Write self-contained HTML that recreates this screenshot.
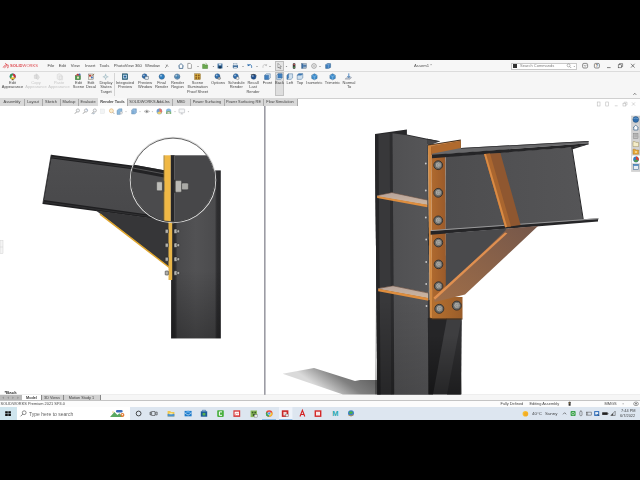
<!DOCTYPE html>
<html><head><meta charset="utf-8"><title>SOLIDWORKS</title>
<style>
html,body{margin:0;padding:0;background:#000;}
body{width:640px;height:480px;overflow:hidden;position:relative;font-family:"Liberation Sans",sans-serif;}
#app{position:absolute;left:0;top:60px;width:640px;height:360px;background:#fff;overflow:hidden;}
.t{position:absolute;white-space:nowrap;color:#222;filter:blur(0.22px);opacity:0.84;}
.c{text-align:center;transform:translateX(-50%);}
.r{position:absolute;}
svg{position:absolute;left:0;top:0;}
</style></head><body>
<div id="app">

<div class="r" style="left:0px;top:0px;width:640px;height:11px;background:#f7f7f7;"></div>
<div class="r" style="left:0px;top:11px;width:640px;height:0.6px;background:#dcdcdc;"></div>
<div class="r" style="left:0px;top:11.6px;width:640px;height:26.4px;background:#f6f6f6;"></div>
<div class="r" style="left:0px;top:38px;width:297px;height:8px;background:#d9d9d9;"></div>
<div class="r" style="left:297px;top:38px;width:343px;height:0.7px;background:#d0d0d0;"></div>
<div class="t" style="left:10px;top:3.6px;font-size:4.1px;line-height:4.92px;color:#d8262c;"><b>SOLID</b>WORKS</div>
<div class="t" style="left:47.5px;top:3.4px;font-size:4.2px;line-height:5.04px;color:#222;">File</div>
<div class="t" style="left:58.8px;top:3.4px;font-size:4.2px;line-height:5.04px;color:#222;">Edit</div>
<div class="t" style="left:70.8px;top:3.4px;font-size:4.2px;line-height:5.04px;color:#222;">View</div>
<div class="t" style="left:85px;top:3.4px;font-size:4.2px;line-height:5.04px;color:#222;">Insert</div>
<div class="t" style="left:99.5px;top:3.4px;font-size:4.2px;line-height:5.04px;color:#222;">Tools</div>
<div class="t" style="left:113.8px;top:3.4px;font-size:4.2px;line-height:5.04px;color:#222;">PhotoView 360</div>
<div class="t" style="left:145px;top:3.4px;font-size:4.2px;line-height:5.04px;color:#222;">Window</div>
<div class="t" style="left:414px;top:3.4px;font-size:4.2px;line-height:5.04px;color:#333;">Assem1 *</div>
<div class="r" style="left:511px;top:2.5px;width:66px;height:7px;background:#fff;border:0.5px solid #c8c8c8;box-sizing:border-box;"></div>
<div class="r" style="left:513px;top:4px;width:4px;height:4px;background:#333;"></div>
<div class="t" style="left:520px;top:3.6px;font-size:4px;line-height:4.80px;color:#666;">Search Commands</div>
<div class="r" style="left:274.7px;top:1px;width:9.2px;height:9.6px;background:#e4e4e4;border:0.5px solid #bdbdbd;box-sizing:border-box;"></div>
<div class="r" style="left:274.6px;top:11.6px;width:9.8px;height:24px;background:#dedede;border:0.5px solid #c2c2c2;box-sizing:border-box;"></div>
<div class="t c" style="left:12.5px;top:20.6px;font-size:4px;line-height:4.80px;color:#222;">Edit</div>
<div class="t c" style="left:12.5px;top:25.1px;font-size:4px;line-height:4.80px;color:#222;">Appearance</div>
<div class="t c" style="left:36px;top:20.6px;font-size:4px;line-height:4.80px;color:#bbb;">Copy</div>
<div class="t c" style="left:36px;top:25.1px;font-size:4px;line-height:4.80px;color:#bbb;">Appearance</div>
<div class="t c" style="left:59px;top:20.6px;font-size:4px;line-height:4.80px;color:#bbb;">Paste</div>
<div class="t c" style="left:59px;top:25.1px;font-size:4px;line-height:4.80px;color:#bbb;">Appearance</div>
<div class="t c" style="left:78.5px;top:20.6px;font-size:4px;line-height:4.80px;color:#222;">Edit</div>
<div class="t c" style="left:78.5px;top:25.1px;font-size:4px;line-height:4.80px;color:#222;">Scene</div>
<div class="t c" style="left:91px;top:20.6px;font-size:4px;line-height:4.80px;color:#222;">Edit</div>
<div class="t c" style="left:91px;top:25.1px;font-size:4px;line-height:4.80px;color:#222;">Decal</div>
<div class="t c" style="left:106px;top:20.6px;font-size:4px;line-height:4.80px;color:#222;">Display</div>
<div class="t c" style="left:106px;top:25.1px;font-size:4px;line-height:4.80px;color:#222;">States</div>
<div class="t c" style="left:106px;top:29.6px;font-size:4px;line-height:4.80px;color:#222;">Target</div>
<div class="t c" style="left:125px;top:20.6px;font-size:4px;line-height:4.80px;color:#222;">Integrated</div>
<div class="t c" style="left:125px;top:25.1px;font-size:4px;line-height:4.80px;color:#222;">Preview</div>
<div class="t c" style="left:145px;top:20.6px;font-size:4px;line-height:4.80px;color:#222;">Preview</div>
<div class="t c" style="left:145px;top:25.1px;font-size:4px;line-height:4.80px;color:#222;">Window</div>
<div class="t c" style="left:161.5px;top:20.6px;font-size:4px;line-height:4.80px;color:#222;">Final</div>
<div class="t c" style="left:161.5px;top:25.1px;font-size:4px;line-height:4.80px;color:#222;">Render</div>
<div class="t c" style="left:177.5px;top:20.6px;font-size:4px;line-height:4.80px;color:#222;">Render</div>
<div class="t c" style="left:177.5px;top:25.1px;font-size:4px;line-height:4.80px;color:#222;">Region</div>
<div class="t c" style="left:197.5px;top:20.6px;font-size:4px;line-height:4.80px;color:#222;">Scene</div>
<div class="t c" style="left:197.5px;top:25.1px;font-size:4px;line-height:4.80px;color:#222;">Illumination</div>
<div class="t c" style="left:197.5px;top:29.6px;font-size:4px;line-height:4.80px;color:#222;">Proof Sheet</div>
<div class="t c" style="left:218px;top:20.6px;font-size:4px;line-height:4.80px;color:#222;">Options</div>
<div class="t c" style="left:236.3px;top:20.6px;font-size:4px;line-height:4.80px;color:#222;">Schedule</div>
<div class="t c" style="left:236.3px;top:25.1px;font-size:4px;line-height:4.80px;color:#222;">Render</div>
<div class="t c" style="left:253px;top:20.6px;font-size:4px;line-height:4.80px;color:#222;">Recall</div>
<div class="t c" style="left:253px;top:25.1px;font-size:4px;line-height:4.80px;color:#222;">Last</div>
<div class="t c" style="left:253px;top:29.6px;font-size:4px;line-height:4.80px;color:#222;">Render</div>
<div class="t c" style="left:267.5px;top:20.6px;font-size:4px;line-height:4.80px;color:#222;">Front</div>
<div class="t c" style="left:279.5px;top:20.6px;font-size:4px;line-height:4.80px;color:#222;">Back</div>
<div class="t c" style="left:289.8px;top:20.6px;font-size:4px;line-height:4.80px;color:#222;">Left</div>
<div class="t c" style="left:300px;top:20.6px;font-size:4px;line-height:4.80px;color:#222;">Top</div>
<div class="t c" style="left:314.4px;top:20.6px;font-size:4px;line-height:4.80px;color:#222;">Isometric</div>
<div class="t c" style="left:332.5px;top:20.6px;font-size:4px;line-height:4.80px;color:#222;">Trimetric</div>
<div class="t c" style="left:349px;top:20.6px;font-size:4px;line-height:4.80px;color:#222;">Normal</div>
<div class="t c" style="left:349px;top:25.1px;font-size:4px;line-height:4.80px;color:#222;">To</div>
<div class="r" style="left:114px;top:13px;width:0.5px;height:23px;background:#d5d5d5;"></div>
<div class="r" style="left:23.7px;top:39px;width:0.5px;height:6.5px;background:#aaa;"></div>
<div class="t c" style="left:12.0px;top:40.4px;font-size:3.9px;line-height:4.68px;color:#222;">Assembly</div>
<div class="r" style="left:41.7px;top:39px;width:0.5px;height:6.5px;background:#aaa;"></div>
<div class="t c" style="left:33.0px;top:40.4px;font-size:3.9px;line-height:4.68px;color:#222;">Layout</div>
<div class="r" style="left:59.7px;top:39px;width:0.5px;height:6.5px;background:#aaa;"></div>
<div class="t c" style="left:51.0px;top:40.4px;font-size:3.9px;line-height:4.68px;color:#222;">Sketch</div>
<div class="r" style="left:77.7px;top:39px;width:0.5px;height:6.5px;background:#aaa;"></div>
<div class="t c" style="left:69.0px;top:40.4px;font-size:3.9px;line-height:4.68px;color:#222;">Markup</div>
<div class="r" style="left:97.7px;top:39px;width:0.5px;height:6.5px;background:#aaa;"></div>
<div class="t c" style="left:88.0px;top:40.4px;font-size:3.9px;line-height:4.68px;color:#222;">Evaluate</div>
<div class="r" style="left:98px;top:38px;width:29px;height:8px;background:#f8f8f8;"></div>
<div class="r" style="left:126.7px;top:39px;width:0.5px;height:6.5px;background:#aaa;"></div>
<div class="t c" style="left:112.5px;top:40.4px;font-size:3.9px;line-height:4.68px;color:#222;font-weight:bold;">Render Tools</div>
<div class="r" style="left:171.7px;top:39px;width:0.5px;height:6.5px;background:#aaa;"></div>
<div class="t c" style="left:149.5px;top:40.4px;font-size:3.9px;line-height:4.68px;color:#222;">SOLIDWORKS Add-Ins</div>
<div class="r" style="left:189.7px;top:39px;width:0.5px;height:6.5px;background:#aaa;"></div>
<div class="t c" style="left:181.0px;top:40.4px;font-size:3.9px;line-height:4.68px;color:#222;">MBD</div>
<div class="r" style="left:223.7px;top:39px;width:0.5px;height:6.5px;background:#aaa;"></div>
<div class="t c" style="left:207.0px;top:40.4px;font-size:3.9px;line-height:4.68px;color:#222;">Power Surfacing</div>
<div class="r" style="left:262.7px;top:39px;width:0.5px;height:6.5px;background:#aaa;"></div>
<div class="t c" style="left:243.5px;top:40.4px;font-size:3.9px;line-height:4.68px;color:#222;">Power Surfacing RE</div>
<div class="r" style="left:296.7px;top:39px;width:0.5px;height:6.5px;background:#aaa;"></div>
<div class="t c" style="left:280.0px;top:40.4px;font-size:3.9px;line-height:4.68px;color:#222;">Flow Simulation</div>
<svg width="640" height="360" viewBox="0 60 640 360">
<defs>
<linearGradient id="gcol" x1="0" x2="1" y1="0" y2="0"><stop offset="0" stop-color="#262628"/><stop offset="0.08" stop-color="#2c2c2e"/><stop offset="0.13" stop-color="#4a4a4c"/><stop offset="0.5" stop-color="#525254"/><stop offset="0.88" stop-color="#4b4b4d"/><stop offset="0.92" stop-color="#2e2e30"/><stop offset="1" stop-color="#29292b"/></linearGradient>
<linearGradient id="gbeam" x1="0" x2="0" y1="0" y2="1"><stop offset="0" stop-color="#4e4e50"/><stop offset="1" stop-color="#48484a"/></linearGradient>
<linearGradient id="gshadow" gradientUnits="userSpaceOnUse" x1="330" y1="396" x2="352" y2="366"><stop offset="0" stop-color="#dadada"/><stop offset="0.55" stop-color="#808080"/><stop offset="1" stop-color="#666666"/></linearGradient>
<linearGradient id="gcop" x1="0" x2="1" y1="0" y2="0"><stop offset="0" stop-color="#b06a2e"/><stop offset="1" stop-color="#9a5a2a"/></linearGradient>
<linearGradient id="gweb" x1="0" x2="1" y1="0" y2="0"><stop offset="0" stop-color="#505052"/><stop offset="1" stop-color="#565658"/></linearGradient>
<clipPath id="cc"><circle cx="173" cy="180" r="41.6"/></clipPath>
<linearGradient id="gdark" x1="0" x2="0" y1="0" y2="1"><stop offset="0" stop-color="#000" stop-opacity="0"/><stop offset="1" stop-color="#000" stop-opacity="0.4"/></linearGradient>
<linearGradient id="gdark2" x1="0" x2="0" y1="0" y2="1"><stop offset="0" stop-color="#000" stop-opacity="0"/><stop offset="1" stop-color="#000" stop-opacity="0.28"/></linearGradient>
<linearGradient id="ghf" x1="0" x2="1" y1="1" y2="0"><stop offset="0" stop-color="#a06e48"/><stop offset="1" stop-color="#75574a"/></linearGradient>
<linearGradient id="gcop2" x1="0" x2="1" y1="0" y2="0"><stop offset="0" stop-color="#b5702f"/><stop offset="1" stop-color="#9a5d2a"/></linearGradient>
<linearGradient id="gst" x1="0" x2="0" y1="0" y2="1"><stop offset="0" stop-color="#b6a39a"/><stop offset="1" stop-color="#cdb6a2"/></linearGradient>
<linearGradient id="gbw" x1="0" x2="1" y1="0" y2="0"><stop offset="0" stop-color="#4d4d4f"/><stop offset="1" stop-color="#555557"/></linearGradient>
</defs>
<!-- divider & right pane -->
<rect x="264" y="106" width="1.6" height="289" fill="#9c9ca4"/>
<rect x="0" y="394.7" width="640" height="0.7" fill="#c6c6c6"/>
<!-- ============ LEFT MODEL ============ -->
<g id="leftmodel">
<polygon points="51.2,154.8 170,170.6 170,221 42.8,203.9" fill="#1f1f21"/>
<polygon points="51.4,158.4 170,174.2 170,217.4 43.9,200" fill="url(#gbeam)"/>
<line x1="51" y1="156.9" x2="170" y2="172.7" stroke="#404042" stroke-width="0.6"/>
<line x1="43.4" y1="202" x2="170" y2="219.2" stroke="#3c3c3e" stroke-width="0.6"/>
<line x1="51.2" y1="154.8" x2="42.8" y2="203.9" stroke="#2a2a2c" stroke-width="0.8"/>
<!-- haunch L -->
<polygon points="96,210.6 170,220.6 170,268" fill="#363638"/>
<line x1="100" y1="214.2" x2="170" y2="268" stroke="#dfa52c" stroke-width="1.5"/>
<!-- column L -->
<rect x="171.1" y="170.4" width="49.7" height="168" fill="url(#gcol)"/>
<rect x="171.1" y="270" width="49.7" height="68.4" fill="url(#gdark2)"/>
<!-- end plate L -->
<rect x="168.5" y="165" width="3.7" height="115" fill="#e8b548"/>
<!-- bolts L -->
<g fill="#b2b2ae" stroke="#202020" stroke-width="0.5">
<rect x="165.2" y="229.3" width="3.2" height="4" rx="0.6"/><rect x="174" y="229.0" width="3.2" height="4.6" rx="0.9"/><rect x="177" y="229.8" width="2.6" height="3" rx="0.9"/>
<rect x="165.2" y="243.2" width="3.2" height="4" rx="0.6"/><rect x="174" y="242.9" width="3.2" height="4.6" rx="0.9"/><rect x="177" y="243.7" width="2.6" height="3" rx="0.9"/>
<rect x="165.2" y="257.2" width="3.2" height="4" rx="0.6"/><rect x="174" y="256.9" width="3.2" height="4.6" rx="0.9"/><rect x="177" y="257.7" width="2.6" height="3" rx="0.9"/>
<rect x="165.2" y="271.0" width="3.2" height="4" rx="0.6"/><rect x="174" y="270.7" width="3.2" height="4.6" rx="0.9"/><rect x="177" y="271.5" width="2.6" height="3" rx="0.9"/>
</g>
<!-- magnifier -->
<circle cx="173" cy="180" r="42.7" fill="none" stroke="#dcdcdc" stroke-width="1.1"/>
<circle cx="173" cy="180" r="41.5" fill="#fff"/>
<g clip-path="url(#cc)">
<polygon points="120,162.1 164.2,170.35 164.2,230 120,230" fill="#4b4b4d"/>
<polygon points="120,162.1 164.2,170.35 164.2,177.4 120,169.2" fill="#232325"/>
<line x1="120" y1="165.6" x2="164.2" y2="173.9" stroke="#5c5c5e" stroke-width="0.9"/>
<polygon points="120,213.4 164.2,224.4 164.2,232 120,232" fill="#232325"/>
<rect x="170.6" y="155.3" width="60" height="80" fill="#474749"/>
<rect x="170.6" y="155.3" width="3.4" height="80" fill="#262628"/>
<rect x="174" y="155.3" width="1" height="80" fill="#5a5a5c"/>
<rect x="164.2" y="155.3" width="6.4" height="80" fill="#f0b845"/>
<rect x="163.6" y="155.3" width="0.8" height="80" fill="#8a6a20"/>
<rect x="156.6" y="181.8" width="5.8" height="9" rx="1" fill="#bdbdb9" stroke="#3a3a3a" stroke-width="0.5"/>
<rect x="162.4" y="180.8" width="1.8" height="11" fill="#4a4a4a"/>
<rect x="175" y="180.6" width="6.6" height="11.6" rx="1.2" fill="#b9b9b5" stroke="#3a3a3a" stroke-width="0.5"/>
<rect x="181.6" y="183" width="6.8" height="6.8" rx="1.2" fill="#aaaaa6" stroke="#3a3a3a" stroke-width="0.5"/>
<rect x="173.6" y="179.8" width="1.8" height="13" fill="#333"/>
</g>
<circle cx="173" cy="180" r="41.9" fill="none" stroke="#3a3a3a" stroke-width="0.8"/>
</g>
<!-- ============ RIGHT MODEL ============ -->
<g id="rightmodel">
<!-- ground shadow -->
<polygon points="282.6,373.8 314,368 355,381 360,380 378,380 378,394.4 343,394.4" fill="url(#gshadow)"/>
<!-- column R -->
<polygon points="375,134 406.9,129.4 406.9,134.4 439.4,141.25 427.5,144 428.7,394.4 377.3,394.4" fill="#29292b"/>
<polygon points="375,134.9 390,132.9 391.8,394.4 377.3,394.4" fill="#38383a"/>
<polygon points="375,134.9 378.4,134.5 380.6,394.4 377.3,394.4" fill="#252527"/>
<polygon points="389.6,132.9 392.8,132.9 394.4,394.4 391.4,394.4" fill="#2d2d2f"/>
<polygon points="392.5,133.2 406.9,135.3 427.5,139.7 428.7,394.4 394.4,394.4" fill="url(#gweb)"/>
<polygon points="427.8,300 461.8,300 460.8,394.4 428.7,394.4" fill="#3e3e40"/>
<polygon points="427.8,318 447,318 433,394.4 428.7,394.4" fill="#252527"/>
<polygon points="461.6,318 460.8,394.4 447,394.4" fill="#303032"/>
<rect x="375" y="300" width="19" height="94.4" fill="url(#gdark)" opacity="0.8"/><rect x="428" y="335" width="34" height="59.4" fill="url(#gdark)"/><rect x="394.4" y="300" width="34" height="94.4" fill="url(#gdark)" opacity="0.35"/>
<!-- column stiffeners -->
<polygon points="377.1,195.4 391.9,192.4 427.4,200 427.4,205 377.1,196.4" fill="url(#gst)"/>
<polygon points="377.1,196 427.4,204.8 427.4,207.2 377.1,198.1" fill="#df8e3e"/>
<polygon points="377.1,195.2 391.9,192.2 427.4,199.8 427.4,200.6 391.9,193 377.1,196" fill="#5a4030" opacity="0.6"/>
<polygon points="378.2,288.3 393,285.7 428.4,292.8 428.4,298.2 378.2,289" fill="url(#gst)"/>
<polygon points="378.2,288.7 428.4,298 428.4,300.8 378.2,291.2" fill="#df8e3e"/>
<polygon points="378.2,288.1 393,285.5 428.4,292.6 428.4,293.4 393,286.3 378.2,288.9" fill="#5a4030" opacity="0.6"/>
<polygon points="427,139 439.6,141.4 428,146" fill="#454547"/><line x1="427" y1="139.2" x2="439.6" y2="141.5" stroke="#29292b" stroke-width="0.8"/>
<!-- end plate R -->
<polygon points="428,144.8 460.8,139.5 460.8,150 431.2,155" fill="#3a2a1c"/>
<polygon points="427.4,144 428,145.4 429.8,318 428.6,318" fill="#242426"/>
<polygon points="428,145.4 431.2,146 432.2,318.6 429.8,317.8" fill="#d08841"/>
<polygon points="431.2,146 445.4,146 446.2,318.6 432.2,318.6" fill="url(#gcop)"/>
<polygon points="431.2,146.3 460.8,141.2 460.8,150 431.2,155" fill="#b06a2e"/>
<polygon points="428,145.6 460.8,140.4 460.8,141.3 431.2,146.4" fill="#c98345"/>
<rect x="432.2" y="297" width="30.3" height="21.6" fill="url(#gcop2)"/>
<polygon points="429.8,317.6 432.2,318.4 462.5,318.4 462.5,319.4 432,319.4 429.8,318.6" fill="#4a3018"/>
<!-- beam web -->
<polygon points="445.6,156.4 571.8,147.2 583.2,220 445.6,231" fill="url(#gbw)"/>
<line x1="571.9" y1="147.4" x2="583.3" y2="219.8" stroke="#262628" stroke-width="1"/>
<polygon points="571,147.2 588.6,144.3 572,149.4" fill="#2a2a2c"/>
<!-- beam top flange -->
<polygon points="432,153.8 461,148 588.6,141.1 588.6,143.3 432,155" fill="#68686a"/>
<polygon points="432,154.8 588.6,143.2 588.6,144.5 571,147.4 432,158.2" fill="#252527"/>
<polygon points="461,148 588.6,141.1 588.6,141.8 461,148.8" fill="#2e2e30"/>
<!-- beam bottom flange -->
<polygon points="445.6,229 582.5,219.2 598.4,218.2 598.4,219.4 430.6,231.2" fill="#59595b"/>
<polygon points="430.6,230.9 598,218.9 598,221.6 430.6,234.8" fill="#252527"/>
<line x1="430.6" y1="230.6" x2="598.4" y2="218.7" stroke="#a0a0a2" stroke-width="0.9"/>
<!-- stiffener -->
<polygon points="484,154 500.4,153 520.6,225 505.1,227.2" fill="#8f5730"/>
<polygon points="484,154 490,153.6 511,226.4 505.1,227.2" fill="#aa662f"/>
<polygon points="484,154 486,153.9 507.2,226.9 505.1,227.2" fill="#d98b45"/>
<!-- haunch -->
<polygon points="445.8,233.2 506,228.5 507,231 445.8,289" fill="#4a4a4c"/>
<polygon points="434,299.5 505.5,230.5 506,228.7 538,226.1 465,294.6 435,302" fill="url(#ghf)"/>
<polygon points="433.6,297.6 505,232.6 507.4,233.3 435,299.8" fill="#e09050"/>
<!-- bolts -->
<g fill="#6c6c6a" stroke="#262626" stroke-width="0.8"><circle cx="438.2" cy="165.2" r="4.4"/><circle cx="438.2" cy="192.8" r="4.4"/><circle cx="438.2" cy="220.4" r="4.4"/><circle cx="438.4" cy="242.6" r="4.3"/><circle cx="438.5" cy="264.4" r="4.3"/><circle cx="438.6" cy="286.1" r="4.3"/><circle cx="439.3" cy="308.8" r="4.5"/><circle cx="456.8" cy="305.6" r="4.5"/></g>
<g fill="#b4b4b0" stroke="#4a4a46" stroke-width="0.5"><circle cx="438.4" cy="165.0" r="2.99"/><circle cx="438.4" cy="192.60000000000002" r="2.99"/><circle cx="438.4" cy="220.20000000000002" r="2.99"/><circle cx="438.59999999999997" cy="242.4" r="2.92"/><circle cx="438.7" cy="264.2" r="2.92"/><circle cx="438.8" cy="285.90000000000003" r="2.92"/><circle cx="439.5" cy="308.6" r="3.06"/><circle cx="457.0" cy="305.40000000000003" r="3.06"/></g>
<g fill="#a5a5a1" stroke="#6a6a64" stroke-width="0.4"><circle cx="438.7" cy="165.1" r="1.67"/><circle cx="438.7" cy="192.70000000000002" r="1.67"/><circle cx="438.7" cy="220.3" r="1.67"/><circle cx="438.9" cy="242.5" r="1.63"/><circle cx="439.0" cy="264.29999999999995" r="1.63"/><circle cx="439.1" cy="286.0" r="1.63"/><circle cx="439.8" cy="308.7" r="1.71"/><circle cx="457.3" cy="305.5" r="1.71"/></g>
<g fill="#c9c9c9">
<circle cx="425.8" cy="163.5" r="0.9"/><circle cx="425.8" cy="190.5" r="0.9"/><circle cx="425.8" cy="217.5" r="0.9"/>
<circle cx="426.2" cy="239.5" r="0.9"/><circle cx="426.2" cy="262" r="0.9"/><circle cx="426.2" cy="284" r="0.9"/><circle cx="426.5" cy="306" r="0.9"/>
</g>
</g>
</svg>

<div class="t" style="left:4.4px;top:329.6px;font-size:4.4px;line-height:5.28px;color:#000;font-weight:bold;font-family:"Liberation Mono",monospace;letter-spacing:0.1px;">*Back</div>
<div class="r" style="left:0px;top:335.4px;width:640px;height:5px;background:#f6f6f6;"></div>
<div class="r" style="left:0px;top:335px;width:22px;height:5.5px;background:#b9b9b9;"></div>
<div class="r" style="left:22px;top:335px;width:19px;height:5.5px;background:#fff;"></div>
<div class="r" style="left:41px;top:335px;width:59px;height:5.5px;background:#d2d2d2;"></div>
<div class="r" style="left:41px;top:335px;width:0.5px;height:5.5px;background:#888;"></div>
<div class="r" style="left:63px;top:335px;width:0.5px;height:5.5px;background:#888;"></div>
<div class="r" style="left:100px;top:335px;width:0.5px;height:5.5px;background:#888;"></div>
<div class="t c" style="left:31.5px;top:335.6px;font-size:3.8px;line-height:4.56px;color:#111;font-weight:bold;">Model</div>
<div class="t c" style="left:52px;top:335.6px;font-size:3.8px;line-height:4.56px;color:#222;">3D Views</div>
<div class="t c" style="left:81.5px;top:335.6px;font-size:3.8px;line-height:4.56px;color:#222;">Motion Study 1</div>
<div class="r" style="left:0px;top:340px;width:640px;height:7px;background:#fcfcfc;border-top:0.6px solid #c4c4c4;box-sizing:border-box;"></div>
<div class="t" style="left:0.5px;top:341.6px;font-size:3.9px;line-height:4.68px;color:#222;">SOLIDWORKS Premium 2021 SP4.0</div>
<div class="t" style="left:500.5px;top:341.6px;font-size:3.9px;line-height:4.68px;color:#222;">Fully Defined</div>
<div class="t" style="left:529.5px;top:341.6px;font-size:3.9px;line-height:4.68px;color:#222;">Editing Assembly</div>
<div class="t" style="left:604.5px;top:341.6px;font-size:3.9px;line-height:4.68px;color:#222;">MMGS</div>
<div class="r" style="left:0px;top:347px;width:640px;height:13px;background:#dde6f0;"></div>
<div class="r" style="left:0px;top:347px;width:16.5px;height:13px;background:#cfe5ee;"></div>
<div class="r" style="left:16.5px;top:347px;width:113.5px;height:13px;background:#fff;"></div>
<div class="t" style="left:29px;top:350.6px;font-size:5px;line-height:6.00px;color:#444;">Type here to search</div>
<div class="t" style="left:532px;top:351px;font-size:4.4px;line-height:5.28px;color:#222;">40°C</div>
<div class="t" style="left:545px;top:351px;font-size:4.4px;line-height:5.28px;color:#222;">Sunny</div>
<div class="t" style="left:621px;top:348.8px;font-size:3.9px;line-height:4.68px;color:#222;">7:44 PM</div>
<div class="t" style="left:620px;top:353.6px;font-size:3.9px;line-height:4.68px;color:#222;">6/7/2022</div>
<svg width="640" height="360" viewBox="0 60 640 360">
<path d="M3.2,67.6 C4.2,65.2 6.2,64.2 8.8,65.4 M5.2,63.2 L7.2,65 M4.4,67.8 L6.6,66 M7.2,67.8 C8.6,67.8 9,66.4 7.6,66.2" stroke="#d8262c" stroke-width="0.7" fill="none"/>
<path d="M165,68 l2.4,-2.4 m-1.2,-1 l2.2,2.2 m-2.6,-0.6 l1.6,-1.6" stroke="#555" stroke-width="0.5" fill="none"/>
<path d="M178.4,66 l2.6,-2.4 l2.6,2.4 M179.2,65.6 v2.8 h3.6 v-2.8" stroke="#1f4e79" stroke-width="0.7" fill="#fff"/>
<path d="M187.8,63.4 h2.4 l1.2,1.2 v3.8 h-3.6z" stroke="#555" stroke-width="0.5" fill="#fff"/>
<path d="M197.2,66.0 h1.6 l-0.8,0.9z" fill="#666"/>
<path d="M202.6,64.2 h2 l0.6,0.7 h2.4 v3.6 h-5z" fill="#6aa84f" stroke="#38761d" stroke-width="0.4"/><path d="M205.5,63.2 l1.6,1.2" stroke="#38761d" stroke-width="0.5"/>
<path d="M212.6,66.0 h1.6 l-0.8,0.9z" fill="#666"/>
<rect x="217.6" y="63.6" width="4.8" height="4.8" fill="#2a5d8f"/><rect x="218.6" y="63.6" width="2.8" height="1.8" fill="#cfe0ef"/><rect x="218.8" y="66.4" width="2.4" height="2" fill="#12324f"/>
<path d="M226.7,66.0 h1.6 l-0.8,0.9z" fill="#666"/>
<rect x="232.8" y="65.2" width="5.2" height="2.6" fill="#3f6f9f"/><rect x="233.8" y="63.6" width="3.2" height="1.8" fill="#dfe8f0" stroke="#5a7a9a" stroke-width="0.3"/><rect x="233.8" y="67" width="3.2" height="1.6" fill="#e8eef4" stroke="#5a7a9a" stroke-width="0.3"/>
<path d="M242.2,66.0 h1.6 l-0.8,0.9z" fill="#666"/>
<path d="M248.2,65.2 c1.8,-1.4 3.8,-0.6 3.4,2.6" stroke="#2f6fb0" stroke-width="0.9" fill="none"/><path d="M247.4,63.8 l0.4,2.4 l2.2,-0.8z" fill="#2f6fb0"/>
<path d="M256.2,66.0 h1.6 l-0.8,0.9z" fill="#666"/>
<path d="M266.4,65.2 c-1.8,-1.4 -3.8,-0.6 -3.4,2.6" stroke="#c4c4c4" stroke-width="0.9" fill="none"/><path d="M267.2,63.8 l-0.4,2.4 l-2.2,-0.8z" fill="#c4c4c4"/>
<path d="M269.2,66.0 h1.6 l-0.8,0.9z" fill="#666"/>
<path d="M278,63.4 v4.6 l1.1,-1 l0.9,1.8 l0.7,-0.3 l-0.9,-1.8 h1.5z" fill="#fff" stroke="#333" stroke-width="0.4"/>
<path d="M285.7,66.0 h1.6 l-0.8,0.9z" fill="#666"/>
<rect x="292.8" y="63.2" width="2.6" height="5.6" rx="0.8" fill="#333"/><circle cx="294.1" cy="64.6" r="0.8" fill="#e06060"/><circle cx="294.1" cy="67.2" r="0.8" fill="#60c060"/>
<rect x="301.6" y="63.6" width="4.8" height="4.8" fill="#9fb4c8" stroke="#456" stroke-width="0.3"/><rect x="301.6" y="63.6" width="1.6" height="4.8" fill="#3b6ea5"/><rect x="303.2" y="65.2" width="3.2" height="1.4" fill="#3b6ea5"/>
<circle cx="314" cy="66" r="2.3" fill="none" stroke="#9a9a9a" stroke-width="0.9"/><circle cx="314" cy="66" r="0.8" fill="#9a9a9a"/>
<path d="M319.2,66.0 h1.6 l-0.8,0.9z" fill="#666"/>
<path d="M325.6,64.6 l2,-1 h3 v3.8 l-2,1 h-3z" fill="#3f7fbf" stroke="#1f4e79" stroke-width="0.4"/><path d="M325.6,64.6 h3 v3.8 M328.6,64.6 l2,-1" stroke="#cfe0f0" stroke-width="0.3" fill="none"/>
<circle cx="568.6" cy="65.4" r="1.5" fill="none" stroke="#777" stroke-width="0.5"/><path d="M569.7,66.5 l1.5,1.5" stroke="#777" stroke-width="0.6"/>
<path d="M573.5,65.9 h1.6 l-0.8,0.9z" fill="#666"/>
<rect x="582.6" y="63.4" width="5" height="4.6" rx="1.2" fill="none" stroke="#444" stroke-width="0.6"/><path d="M583.6,65 l1.5,1.2 l1.5,-1.2" stroke="#444" stroke-width="0.5" fill="none"/>
<rect x="594.4" y="63.4" width="5" height="4.6" rx="1.2" fill="none" stroke="#444" stroke-width="0.6"/><text x="596.9" y="67.2" font-size="3.6" font-family="Liberation Sans, sans-serif" font-weight="bold" text-anchor="middle" fill="#444">?</text>
<path d="M607,67.6 h3.6" stroke="#333" stroke-width="0.6"/>
<rect x="618.2" y="64.8" width="3.2" height="3" fill="none" stroke="#333" stroke-width="0.5"/><path d="M619.4,64.8 v-1.2 h3.2 v3 h-1.2" fill="none" stroke="#333" stroke-width="0.5"/>
<path d="M631,63.8 l3.6,3.8 m0,-3.8 l-3.6,3.8" stroke="#333" stroke-width="0.6"/>
<path d="M633.4,94.8 l1.4,-1.5 l1.4,1.5" stroke="#333" stroke-width="0.6" fill="none"/>
<g stroke="#b0b0b0" stroke-width="0.5" fill="none"><rect x="597.2" y="102" width="2.8" height="4"/><rect x="605.8" y="102" width="2.8" height="4"/><path d="M614.8,105.8 h2.8"/><rect x="623" y="103.2" width="2.8" height="2.8"/><path d="M624.2,103.2 v-1 h2.8 v2.8 h-1.2"/><path d="M632,102.4 l3,3.2 m0,-3.2 l-3,3.2"/></g>
<circle cx="12.7" cy="76.6" r="3" fill="#3a7abf"/><path d="M12.7,76.6 L12.7,73.6 A3,3 0 0 1 15.3,78.1z" fill="#d03030"/><path d="M12.7,76.6 L15.3,78.1 A3,3 0 0 1 10.1,78.1z" fill="#e8c030"/><path d="M12.7,76.6 L10.1,78.1 A3,3 0 0 1 12.7,73.6z" fill="#3a9a4a"/><circle cx="12.7" cy="76.6" r="1" fill="#f4f4f4"/><path d="M12,79 l1.4,0 l0.3,1.2 h-2z" fill="#7a5a30"/>
<path d="M34.4,75 h2.6 v3.4 h-2.6z M36,73.8 l1.8,1 l1.6,2.4 l-1.4,2.4 l-1.6,-1z" fill="#e2e2e2" stroke="#c6c6c6" stroke-width="0.4"/>
<path d="M57.2,74.6 l2,-1 l2.6,1.4 v4 l-2.4,1 l-2.2,-1.2z M59.4,76 h3.2 v3.8 h-3.2z" fill="#ececec" stroke="#cfcfcf" stroke-width="0.4"/>
<rect x="75.2" y="75.6" width="5.4" height="4.2" fill="#4f9a4f" stroke="#2d5a2d" stroke-width="0.3"/><path d="M75.2,75.6 l2.7,-2 l2.7,2z" fill="#c03030"/><rect x="77" y="76.6" width="2" height="2" fill="#e8e0c0"/><circle cx="79.6" cy="74.6" r="1" fill="#3a6abf"/>
<rect x="88.2" y="74" width="5" height="5.4" fill="#f0ead8" stroke="#555" stroke-width="0.4"/><rect x="89" y="74.8" width="2.2" height="1.8" fill="#c04040"/><rect x="91" y="76.6" width="1.8" height="1.8" fill="#4070c0"/><path d="M91.6,76 l2.6,-2" stroke="#7a5a30" stroke-width="0.7"/>
<path d="M105.6,73.8 v6 M102.8,76.8 h5.6" stroke="#9fb8c8" stroke-width="0.8"/><circle cx="105.6" cy="76.8" r="1.4" fill="#dfe8ee" stroke="#8aa" stroke-width="0.4"/>
<rect x="122.2" y="73.8" width="5.6" height="5.8" fill="#2f6f8f" stroke="#1a3f55" stroke-width="0.4"/><rect x="123.2" y="74.8" width="3.6" height="3.6" fill="#cfe4ee"/><circle cx="125" cy="76.6" r="1.2" fill="#2a5f9f"/>
<circle cx="144.6" cy="76.2" r="2.4" fill="#2f6fb0" stroke="#1d3f66" stroke-width="0.4"/><circle cx="143.88" cy="75.36" r="0.84" fill="#fff" opacity="0.55"/>
<rect x="145" y="76.4" width="3.2" height="3" fill="#dde8f2" stroke="#345" stroke-width="0.4"/>
<circle cx="161.8" cy="76.6" r="2.7" fill="#2f7fc0" stroke="#1d3f66" stroke-width="0.4"/><circle cx="160.99" cy="75.66" r="0.94" fill="#fff" opacity="0.55"/>
<circle cx="177.2" cy="76.6" r="2.7" fill="#3f7fb0" stroke="#1d3f66" stroke-width="0.4"/><circle cx="176.39" cy="75.66" r="0.94" fill="#fff" opacity="0.55"/>
<rect x="175.4" y="74.8" width="3.6" height="3.6" fill="none" stroke="#e8e8e8" stroke-width="0.4" stroke-dasharray="0.8,0.5"/>
<rect x="194.6" y="73.8" width="5.8" height="5.8" fill="#d8b040" stroke="#7a5a20" stroke-width="0.4"/><circle cx="196.2" cy="75.4" r="1" fill="#8a5a20"/><circle cx="198.8" cy="75.4" r="1" fill="#8a5a20"/><circle cx="196.2" cy="78" r="1" fill="#8a5a20"/><circle cx="198.8" cy="78" r="1" fill="#8a5a20"/>
<circle cx="217.4" cy="76.2" r="2.5" fill="#2f6fb0" stroke="#1d3f66" stroke-width="0.4"/><circle cx="216.65" cy="75.33" r="0.88" fill="#fff" opacity="0.55"/>
<circle cx="219.2" cy="78.2" r="1.3" fill="#bbb" stroke="#444" stroke-width="0.4"/>
<circle cx="235.8" cy="76.2" r="2.5" fill="#2f6fb0" stroke="#1d3f66" stroke-width="0.4"/><circle cx="235.05" cy="75.33" r="0.88" fill="#fff" opacity="0.55"/>
<circle cx="237.6" cy="78.2" r="1.4" fill="#f4f4f4" stroke="#444" stroke-width="0.4"/>
<circle cx="253.6" cy="76.8" r="2.5" fill="#1f4f8f" stroke="#1d3f66" stroke-width="0.4"/><circle cx="252.85" cy="75.92" r="0.88" fill="#fff" opacity="0.55"/>
<path d="M250.8,74.6 h4.6 l1,1" stroke="#333" stroke-width="0.6" fill="none"/>
<path d="M264.7,75.2 l1.6,-1.4 h4 v4.2 l-1.6,1.4 h-4z" fill="#cfe0ee" stroke="#2a5a8a" stroke-width="0.4"/>
<rect x="267.5" y="76.8" width="0" height="0"/><path d="M264.7,75.2 h4 v4.2 h-4z" fill="#3f7fbf" stroke="#2a5a8a" stroke-width="0.3"/>
<path d="M276.7,75.2 l1.6,-1.4 h4 v4.2 l-1.6,1.4 h-4z" fill="#cfe0ee" stroke="#2a5a8a" stroke-width="0.4"/>
<path d="M277.9,73.8 h4 v4.2 h-4z" fill="#3f7fbf" stroke="#2a5a8a" stroke-width="0.3"/>
<path d="M287.0,75.2 l1.6,-1.4 h4 v4.2 l-1.6,1.4 h-4z" fill="#cfe0ee" stroke="#2a5a8a" stroke-width="0.4"/>
<path d="M287,75.2 l1.6,-1.4 v4.2 l-1.6,1.4z" fill="#3f7fbf" stroke="#2a5a8a" stroke-width="0.3"/>
<path d="M297.2,75.2 l1.6,-1.4 h4 v4.2 l-1.6,1.4 h-4z" fill="#cfe0ee" stroke="#2a5a8a" stroke-width="0.4"/>
<path d="M297.2,75.2 l1.6,-1.4 h4 l-1.6,1.4z" fill="#3f7fbf" stroke="#2a5a8a" stroke-width="0.3"/>
<path d="M314.4,73.8 l2.7,1.4 v3.2 l-2.7,1.4 l-2.7,-1.4 v-3.2z" fill="#3f8fcf" stroke="#1f4e79" stroke-width="0.4"/><path d="M311.7,75.2 l2.7,1.4 l2.7,-1.4 M314.4,76.6 v3.2" stroke="#bfe0f8" stroke-width="0.35" fill="none"/>
<path d="M332.6,73.8 l2.7,1.4 v3.2 l-2.7,1.4 l-2.7,-1.4 v-3.2z" fill="#3f8fcf" stroke="#1f4e79" stroke-width="0.4"/><path d="M329.90000000000003,75.2 l2.7,1.4 l2.7,-1.4 M332.6,76.6 v3.2" stroke="#bfe0f8" stroke-width="0.35" fill="none"/>
<path d="M345.6,78.4 l1.6,-1 h4.4 l-1.6,1.8 h-5z" fill="#b8c4d0" stroke="#667" stroke-width="0.3"/><path d="M348.8,73.4 v3.6 m-1.4,-1 l1.4,1.6 l1.4,-1.6" stroke="#2f6fb0" stroke-width="0.8" fill="none"/>
<g opacity="0.72">
<circle cx="77.89999999999999" cy="110.5" r="1.6" fill="#f2f6fa" stroke="#555" stroke-width="0.5"/><path d="M76.69999999999999,111.80000000000001 l-1.8,1.9" stroke="#555" stroke-width="0.8"/>
<circle cx="86.0" cy="110.5" r="1.6" fill="#f2f6fa" stroke="#555" stroke-width="0.5"/><path d="M84.8,111.80000000000001 l-1.8,1.9" stroke="#555" stroke-width="0.8"/>
<path d="M86.6,108.4 v1.2 m1.4,0.6 h-1.2" stroke="#3a6abf" stroke-width="0.4"/>
<circle cx="94.8" cy="110.5" r="1.6" fill="#f2f6fa" stroke="#555" stroke-width="0.5"/><path d="M93.6,111.80000000000001 l-1.8,1.9" stroke="#555" stroke-width="0.8"/>
<path d="M92,113.60000000000001 l2,-1.2 l1.2,0.8 l-2,1.4z" fill="#9ab"/>
<rect x="100.6" y="109.0" width="4" height="4.6" fill="#eef0f2" stroke="#d0d4d8" stroke-width="0.4"/>
<circle cx="111.4" cy="110.80000000000001" r="2" fill="#f8e8c0" stroke="#d08a30" stroke-width="0.6"/><path d="M112.8,112.2 l1.6,1.8" stroke="#777" stroke-width="0.8"/>
<path d="M117,110.4 l2,-1.6 h3 v4 l-2,1.6 h-3z" fill="#5f9fd0" stroke="#2a5a8a" stroke-width="0.4"/><circle cx="121.2" cy="112.80000000000001" r="1.2" fill="#e8e8e8" stroke="#555" stroke-width="0.3"/>
<path d="M125.2,111.4 h1.6 l-0.8,0.9z" fill="#666"/>
<path d="M131.6,110.0 l1.4,-1.2 h3.4 v4 l-1.4,1.2 h-3.4z" fill="#4f8fc8" stroke="#2a5a8a" stroke-width="0.4"/><path d="M131.6,110.0 h3.4 v4" stroke="#cfe4f4" stroke-width="0.3" fill="none"/>
<path d="M139.2,111.4 h1.6 l-0.8,0.9z" fill="#666"/>
<path d="M144,111.4 q2.8,-3 5.6,0 q-2.8,3 -5.6,0z" fill="#e8e8e8" stroke="#666" stroke-width="0.4"/><circle cx="146.8" cy="111.4" r="1" fill="#444"/>
<path d="M151.6,111.4 h1.6 l-0.8,0.9z" fill="#666"/>
<circle cx="159.4" cy="111.4" r="2.8" fill="#3a7abf"/><path d="M159.4,111.4 v-2.8 a2.8,2.8 0 0 1 2.4,4.2z" fill="#d84030"/><path d="M159.4,111.4 l2.4,1.4 a2.8,2.8 0 0 1 -4.8,0z" fill="#e8c030"/>
<circle cx="168.6" cy="111.0" r="2.6" fill="#5a9ad0"/><path d="M166,111.80000000000001 q2.6,-1.6 5.2,0 v2.2 h-5.2z" fill="#4f9a4f"/><rect x="167.4" y="112.0" width="2.4" height="1.8" fill="#e8e4d0" stroke="#765" stroke-width="0.3"/>
<path d="M174.2,111.4 h1.6 l-0.8,0.9z" fill="#666"/>
<rect x="179" y="109.0" width="5.6" height="3.8" rx="0.4" fill="#f4f6f8" stroke="#8a8f94" stroke-width="0.5"/><path d="M180.6,114.0 h2.4 M181.8,112.80000000000001 v1.2" stroke="#8a8f94" stroke-width="0.5"/>
<path d="M187.6,111.4 h1.6 l-0.8,0.9z" fill="#666"/>
</g>
<rect x="631.6" y="116" width="8.4" height="55.4" fill="#d4d4d4" stroke="#b4b4b4" stroke-width="0.4"/>
<path d="M631.6,122.9 h8.4" stroke="#bcbcbc" stroke-width="0.3"/>
<path d="M631.6,129.8 h8.4" stroke="#bcbcbc" stroke-width="0.3"/>
<path d="M631.6,136.7 h8.4" stroke="#bcbcbc" stroke-width="0.3"/>
<path d="M631.6,143.6 h8.4" stroke="#bcbcbc" stroke-width="0.3"/>
<path d="M631.6,150.5 h8.4" stroke="#bcbcbc" stroke-width="0.3"/>
<path d="M631.6,157.4 h8.4" stroke="#bcbcbc" stroke-width="0.3"/>
<path d="M631.6,164.3 h8.4" stroke="#bcbcbc" stroke-width="0.3"/>
<circle cx="635.8" cy="119.5" r="2.9" fill="#2f6fb0" stroke="#1a3f66" stroke-width="0.4"/><path d="M633.4,118.6 q2.4,-1.2 4.8,0" stroke="#bfe0f8" stroke-width="0.4" fill="none"/>
<path d="M633,127.8 l2.8,-2.6 l2.8,2.6 M633.8,127.4 v2.6 h4 v-2.6" stroke="#1f4e79" stroke-width="0.6" fill="#fff"/>
<rect x="633.6" y="133.2" width="4.4" height="5.4" fill="#c0c0c0" stroke="#777" stroke-width="0.4"/><path d="M634.4,134.8 h2.8 m-2.8,1.4 h2.8" stroke="#777" stroke-width="0.3"/>
<path d="M633,141.6 h2.2 l0.6,0.8 h2.8 v4.2 h-5.6z" fill="#f4ecc8" stroke="#8a7a40" stroke-width="0.4"/>
<path d="M633,149.2 h2.2 l0.6,0.8 h2.8 v4.2 h-5.6z" fill="#e8a838" stroke="#9a6a20" stroke-width="0.4"/><circle cx="636" cy="152" r="1" fill="#f8e0a0"/>
<rect x="632" y="155.6" width="8" height="7.6" fill="#fff"/><circle cx="636" cy="159.4" r="2.8" fill="#3a7abf"/><path d="M636,159.4 v-2.8 a2.8,2.8 0 0 1 2.4,4.2z" fill="#d84030"/><path d="M636,159.4 l2.4,1.4 a2.8,2.8 0 0 1 -4.8,0z" fill="#4f9a4f"/>
<rect x="633.4" y="164.4" width="5" height="5" fill="#e8eef4" stroke="#2a5a8a" stroke-width="0.5"/><rect x="633.4" y="164.4" width="5" height="1.4" fill="#3f7fbf"/>
<rect x="0" y="240.6" width="3" height="13" fill="#f4f4f4" stroke="#c8c8c8" stroke-width="0.4"/><path d="M0,247 h3" stroke="#c8c8c8" stroke-width="0.4"/>
<path d="M3.8,396.6 l-1.4,1.2 l1.4,1.2z" fill="#8c8c8c"/>
<path d="M8.8,396.6 l-1.4,1.2 l1.4,1.2z" fill="#8c8c8c"/>
<path d="M12.4,396.6 l1.4,1.2 l-1.4,1.2z" fill="#8c8c8c"/>
<path d="M17.4,396.6 l1.4,1.2 l-1.4,1.2z" fill="#8c8c8c"/>
<rect x="568.6" y="401.8" width="2" height="4" rx="0.5" fill="#333"/><circle cx="569.6" cy="403" r="0.5" fill="#d0a040"/>
<path d="M622.4,403.8 h1.6" stroke="#555" stroke-width="0.4"/>
<ellipse cx="636" cy="403.8" rx="2.4" ry="1.8" fill="#fff" stroke="#444" stroke-width="0.5"/><circle cx="636" cy="403.8" r="0.8" fill="#444"/>
<path d="M5.2,411.2 h2.6 v2.2 h-2.6z M8.3,411.2 h2.6 v2.2 h-2.6z M5.2,413.9 h2.6 v2.2 h-2.6z M8.3,413.9 h2.6 v2.2 h-2.6z" fill="#111"/>
<circle cx="24.2" cy="412.7" r="1.9" fill="none" stroke="#333" stroke-width="0.55"/><path d="M22.8,414.1 l-2.2,2.2" stroke="#333" stroke-width="0.6"/>
<path d="M110,416.9 l4.4,-5 l3,3 l2,-1.6 l3.4,3.6z" fill="#5aa860"/><path d="M113,410.9 l0.8,1.6 l-1.6,0z" fill="#e8c040"/><rect x="116" y="409.9" width="6.6" height="2.6" rx="1.2" fill="#3a6ab8"/><circle cx="122.4" cy="414.9" r="2" fill="#e07830"/><circle cx="122.4" cy="414.7" r="0.8" fill="#fff"/>
<circle cx="138.6" cy="413.5" r="2.4" fill="none" stroke="#222" stroke-width="0.8"/>
<path d="M151.6,411.5 h3.4 v4 h-3.4z M155.8,412.1 h1.4 v2.8 h-1.4z M150,412.1 h0.8 v2.8 h-0.8z" fill="none" stroke="#222" stroke-width="0.5"/>
<path d="M167.6,411.1 h2.6 l0.8,0.9 h3.4 v4.4 h-6.8z" fill="#f0c850"/><rect x="167.6" y="413.9" width="6.8" height="2.6" fill="#4a90d0"/><rect x="169.4" y="412.9" width="3.2" height="1.4" fill="#f8e8a0"/>
<rect x="184.6" y="410.9" width="7" height="5.4" fill="#1a78c8"/><path d="M184.6,412.9 l3.5,2.2 l3.5,-2.2" stroke="#fff" stroke-width="0.6" fill="none"/><path d="M184.6,412.7 l3.5,-2.2 l3.5,2.2" fill="#5aa8e8"/>
<rect x="200.8" y="411.3" width="6.4" height="5.4" fill="#1a5a9a"/><path d="M202.4,411.3 v-1 h3.2 v1" stroke="#1a5a9a" stroke-width="0.6" fill="none"/><rect x="202.6" y="412.9" width="2.8" height="2.6" fill="#5ab050"/>
<rect x="217.2" y="410.3" width="6.6" height="6.6" rx="0.8" fill="#4ab040"/><path d="M222,411.9 h-2.6 v3.4 h2.6" stroke="#fff" stroke-width="1" fill="none"/>
<rect x="233.4" y="410.3" width="6.8" height="6.6" fill="#d83a3a"/><rect x="234.6" y="411.7" width="4.4" height="3.6" fill="#fff"/><path d="M235,414.9 l1.6,-2 l1,1 l1,-0.8" stroke="#d83a3a" stroke-width="0.5" fill="none"/>
<rect x="250.6" y="410.5" width="6.4" height="6.6" fill="#8ab858"/><rect x="251.8" y="411.7" width="1.6" height="1.6" fill="#3a5a28"/><rect x="254.4" y="411.7" width="1.6" height="1.6" fill="#3a5a28"/><rect x="252.8" y="413.9" width="2.2" height="2.2" fill="#3a5a28"/><rect x="254.2" y="414.7" width="3" height="2.4" fill="#e8e8e8" stroke="#555" stroke-width="0.3"/>
<circle cx="269.2" cy="413.5" r="3.3" fill="#e84a3a"/><path d="M269.2,413.5 L266.3,411.9 A3.3,3.3 0 0 0 269.2,416.8z" fill="#38a858"/><path d="M269.2,413.5 L269.2,416.8 A3.3,3.3 0 0 0 272.3,412.3z" fill="#f4c430"/><circle cx="269.2" cy="413.5" r="1.4" fill="#4a8af0" stroke="#fff" stroke-width="0.5"/>
<rect x="262" y="419" width="14" height="0.8" fill="#7ab0e0"/>
<rect x="279" y="407.2" width="13.4" height="12.8" fill="#eef3fa"/><rect x="279" y="419" width="13.4" height="0.8" fill="#7ab0e0"/>
<rect x="281.8" y="410.3" width="6.6" height="6.6" fill="#c82828"/><path d="M283.4,411.9 h3.2 v3.6 h-3.2z" fill="#f0d8d8"/><rect x="285.8" y="414.1" width="2.8" height="2.6" fill="#e8e8e8" stroke="#555" stroke-width="0.3"/>
<path d="M300,416.5 l2.4,-6.2 l2.4,6.2 M300.8,414.5 h3.4" stroke="#d42020" stroke-width="1.1" fill="none"/>
<rect x="314.6" y="410.3" width="6.8" height="6.6" fill="#d42828"/><rect x="316" y="411.7" width="4" height="3.8" fill="#f8e8e8"/>
<text x="335.4" y="416.1" font-size="7.4" font-weight="bold" font-family="Liberation Sans, sans-serif" text-anchor="middle" fill="#28a8b0">M</text>
<circle cx="351" cy="413.3" r="3" fill="#3a7ad0"/><path d="M348.6,412.1 q2.4,-2 4.6,0.2 q-1,2.4 -3.2,1.6z" fill="#48b048"/><path d="M348.4,415.1 q2.8,2 5.4,-0.6" stroke="#e8a020" stroke-width="0.7" fill="none"/>
<circle cx="525.4" cy="413.7" r="2.8" fill="#f8c030"/><circle cx="526" cy="414.1" r="2.2" fill="#f0a020" opacity="0.6"/>
<path d="M563,414.3 l1.6,-1.6 l1.6,1.6" stroke="#333" stroke-width="0.6" fill="none"/>
<rect x="570.6" y="411.1" width="5" height="5" rx="0.8" fill="#38a048"/><circle cx="573.1" cy="413.6" r="1.3" fill="none" stroke="#fff" stroke-width="0.5"/>
<rect x="579.8" y="411.3" width="2.2" height="4.4" rx="0.8" fill="none" stroke="#444" stroke-width="0.5"/><path d="M580.9,410.3 v1" stroke="#444" stroke-width="0.5"/>
<rect x="586.6" y="412.1" width="4.6" height="3" fill="none" stroke="#444" stroke-width="0.5"/><path d="M587.6,412.1 v3" stroke="#444" stroke-width="0.4"/>
<rect x="594.2" y="411.1" width="5" height="4.8" fill="#2a6ab8"/><rect x="595.2" y="412.1" width="3" height="2.4" fill="#e8f0f8"/><path d="M597.4,414.1 l1.8,1.8" stroke="#123" stroke-width="0.6"/>
<rect x="602.2" y="412.3" width="5.4" height="2.6" fill="#222"/><rect x="607.6" y="413.0" width="0.7" height="1.2" fill="#222"/>
<path d="M610.8,415.5 l4.4,-4.4 v4.4z" fill="none" stroke="#444" stroke-width="0.5"/><path d="M610.8,415.5 l2.4,-2.4 v2.4z" fill="#444"/>
</svg>
</div>
</body></html>
